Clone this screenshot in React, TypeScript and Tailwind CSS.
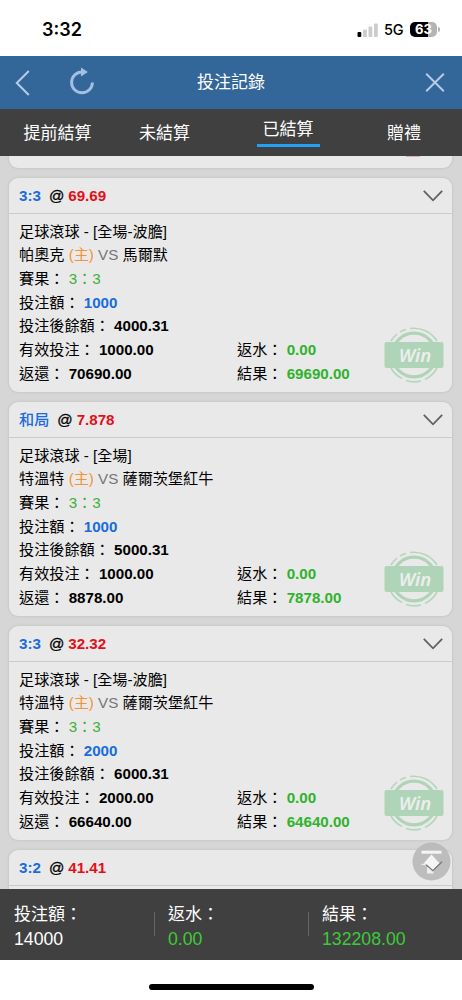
import type { ReactNode } from "react";

type Bet = {
  pick: string;
  odds: string;
  market: string;
  home: string;
  away: string;
  score: string;
  stake: string;
  balance: string;
  valid: string;
  payout: string;
  rebate: string;
  result: string;
};

const bets: Bet[] = [
  {
    pick: "3:3",
    odds: "69.69",
    market: "足球滾球 - [全場-波膽]",
    home: "帕奧克",
    away: "馬爾默",
    score: "3：3",
    stake: "1000",
    balance: "4000.31",
    valid: "1000.00",
    payout: "70690.00",
    rebate: "0.00",
    result: "69690.00",
  },
  {
    pick: "和局",
    odds: "7.878",
    market: "足球滾球 - [全場]",
    home: "特溫特",
    away: "薩爾茨堡紅牛",
    score: "3：3",
    stake: "1000",
    balance: "5000.31",
    valid: "1000.00",
    payout: "8878.00",
    rebate: "0.00",
    result: "7878.00",
  },
  {
    pick: "3:3",
    odds: "32.32",
    market: "足球滾球 - [全場-波膽]",
    home: "特溫特",
    away: "薩爾茨堡紅牛",
    score: "3：3",
    stake: "2000",
    balance: "6000.31",
    valid: "2000.00",
    payout: "66640.00",
    rebate: "0.00",
    result: "64640.00",
  },
];

function StatusBar() {
  return (
    <div className="flex h-14 shrink-0 items-center justify-between bg-white pt-[3px] pr-[22px] pl-[42px] font-['Inter','Liberation_Sans',sans-serif]">
      <span className="text-[18px] font-semibold">3:32</span>
      <div className="flex items-center">
        <svg width="21" height="14" viewBox="0 0 21 14" aria-hidden>
          <rect x="0.5" y="9" width="3.8" height="5" rx="1" fill="#000" />
          <rect x="6" y="6.5" width="3.8" height="7.5" rx="1" fill="#ccc" />
          <rect x="11.5" y="3.5" width="3.8" height="10.5" rx="1" fill="#ccc" />
          <rect x="17" y="0.5" width="3.8" height="13.5" rx="1" fill="#ccc" />
        </svg>
        <span className="ml-[6px] w-[20px] text-[14.5px] font-medium tracking-[-0.3px]">5G</span>
        <div className="ml-[6px] flex h-[15px] w-[27px] items-center justify-center rounded-[5px] bg-linear-to-r from-black from-65% to-[#b4b4b4] to-65% text-[13px] leading-none font-bold text-white">
          63
        </div>
        <span className="ml-px h-[5px] w-[2px] rounded-r-full bg-[#b4b4b4]" />
      </div>
    </div>
  );
}

function TitleBar() {
  return (
    <header className="flex h-[53px] shrink-0 items-center bg-[#336699] text-[17px] text-white">
      <div className="flex w-[148px] items-center pl-[14px]">
        <svg width="16" height="26" viewBox="0 0 16 26" fill="none" stroke="#b5cbed" strokeWidth="2" aria-hidden>
          <path d="M14.8 1 2.8 13l12 12" />
        </svg>
        <svg className="mb-[4px] ml-[39px]" width="26" height="28" viewBox="0 0 26 28" fill="none" aria-hidden>
          <path d="M23.4 15.4A10.4 10.4 0 1 1 13 5" stroke="#a3bfe5" strokeWidth="2.9" />
          <path d="M12 .5 18.9 5 12 9.5z" fill="#a3bfe5" />
        </svg>
      </div>
      <h1 className="flex-1 text-center">投注記錄</h1>
      <div className="flex w-[148px] justify-end pr-[17px]">
        <svg width="20" height="20" viewBox="0 0 20 20" stroke="#b9cae8" strokeWidth="2" aria-hidden>
          <path d="m1.2.7 17.6 17.6M18.8.7 1.2 18.3" />
        </svg>
      </div>
    </header>
  );
}

function Tabs() {
  return (
    <nav className="grid h-[47px] shrink-0 grid-cols-[115px_99px_148px_1fr] bg-[#404040] text-[17px] leading-[50px] text-white">
      <span className="text-center">提前結算</span>
      <span className="text-center">未結算</span>
      <span className="flex justify-center">
        <span className="mt-[1px] flex h-[37px] w-[63px] justify-center border-b-[3px] border-[#20a3f5] leading-[40px]">
          已結算
        </span>
      </span>
      <span className="pr-[16px] text-center">贈禮</span>
    </nav>
  );
}

function WinStamp() {
  return (
    <svg
      className="absolute right-[8.5px] bottom-[9px]"
      width="60"
      height="56"
      viewBox="0 0 60 56"
      fill="none"
      aria-hidden
    >
      <circle cx="30" cy="28" r="21.8" stroke="#afd4b8" strokeWidth="3.2" />
      <path d="M7 14a27 27 0 0 1 6-7M16 5a27 27 0 0 1 6-2.5M26 1.5a27 27 0 0 1 27 12.5" stroke="#b3d7bd" strokeWidth="1.6" />
      <path d="M7 41a27 27 0 0 0 11 10.5M22 53.5a27 27 0 0 0 15 .5M41 52.5a27 27 0 0 0 12-11.5" stroke="#b3d7bd" strokeWidth="1.6" />
      <rect x="0.5" y="15" width="59" height="26" rx="2" fill="#afd4b8" />
      <text
        x="31"
        y="34.5"
        textAnchor="middle"
        className="fill-[#ebefec] font-['Noto_Sans','Open_Sans',sans-serif] text-[18.5px] font-semibold italic"
      >
        Win
      </text>
    </svg>
  );
}

function CardHeader({ pick, odds, hideArrow }: { pick: string; odds: string; hideArrow?: boolean }) {
  return (
    <div className="flex h-9 items-center border-b border-[#cbcbcb] pt-px pr-[9px] pl-[10px] font-bold">
      <span className={pick.includes(":") ? "text-[#1a6be0]" : "font-medium text-[#1a6be0]"}>{pick}</span>
      <span className="ml-[8px] font-normal text-black [-webkit-text-stroke:0.3px_black]">@</span>
      <span className="ml-[4px] text-[#e2101a]">{odds}</span>
      {!hideArrow && (
        <svg className="mb-px ml-auto" width="20" height="12" viewBox="0 0 20 12" fill="none" stroke="#606060" strokeWidth="1.8" aria-hidden>
          <path d="m.8.8 9.2 9.5L19.2.8" />
        </svg>
      )}
    </div>
  );
}

function Field({ label, children }: { label: string; children: ReactNode }) {
  return (
    <p>
      {label}： <span className="font-bold">{children}</span>
    </p>
  );
}

function BetCard({ bet }: { bet: Bet }) {
  return (
    <section className="relative h-[214px] shrink-0 rounded-[9px] bg-[#e9e9e9] shadow-[0_0_3px_rgba(0,0,0,0.13)]">
      <CardHeader pick={bet.pick} odds={bet.odds} />
      <div className="px-[10px] pt-[5.5px] leading-[23.7px]">
        <p>{bet.market}</p>
        <p>
          {bet.home} <span className="text-[#f59335]">(主)</span>{" "}
          <span className="text-[#777]">VS</span> {bet.away}
        </p>
        <p>
          賽果： <span className="text-[#3eae3d]">{bet.score}</span>
        </p>
        <Field label="投注額">
          <span className="text-[#1a6be0]">{bet.stake}</span>
        </Field>
        <Field label="投注後餘額">{bet.balance}</Field>
        <div className="grid grid-cols-[218px_1fr]">
          <Field label="有效投注">{bet.valid}</Field>
          <Field label="返水">
            <span className="text-[#2fb32c]">{bet.rebate}</span>
          </Field>
          <Field label="返還">{bet.payout}</Field>
          <Field label="結果">
            <span className="text-[#2fb32c]">{bet.result}</span>
          </Field>
        </div>
      </div>
      <WinStamp />
    </section>
  );
}

function BackToTop() {
  return (
    <svg className="absolute right-[11px] bottom-[8px]" width="39" height="39" viewBox="0 0 39 39" aria-hidden>
      <circle cx="19.5" cy="19.5" r="19" fill="#b9b9b9" fillOpacity="0.93" />
      <rect x="9.5" y="8.7" width="20" height="3" fill="#f5f5f5" />
      <path d="M15 25h6.5v6.5H15z" fill="#eee" />
      <path d="M9.5 22.3h4M13 20.5v3" stroke="#eee" strokeWidth="1.2" />
      <path d="m19.5 12.5 8 8.7-6.7 7.5-8.6-8z" fill="#f5f5f5" />
      <path d="m14.2 22.7 6.6 6 9.2-9" fill="none" stroke="#777" strokeWidth="1.2" />
    </svg>
  );
}

function Total({ label, value, green }: { label: string; value: string; green?: boolean }) {
  return (
    <div>
      <p>{label}：</p>
      <p className={green ? "text-[17.7px] text-[#3dca3a]" : "text-[17.7px]"}>{value}</p>
    </div>
  );
}

function Summary() {
  return (
    <footer className="grid h-[71px] shrink-0 grid-cols-[140px_154px_1fr] bg-[#404040] pt-[13px] pl-[14px] text-[17px] leading-[25px] text-white">
      <Total label="投注額" value="14000" />
      <div className="flex items-start gap-[13px]">
        <span className="mt-[10px] h-6 w-px bg-[#666]" />
        <Total label="返水" value="0.00" green />
      </div>
      <div className="flex items-start gap-[13px]">
        <span className="mt-[10px] h-6 w-px bg-[#666]" />
        <Total label="結果" value="132208.00" green />
      </div>
    </footer>
  );
}

export default function App() {
  return (
    <div
      lang="zh-Hant"
      className="flex h-[1000px] w-[462px] flex-col overflow-hidden bg-white font-['Liberation_Sans','Noto_Sans_CJK_TC',sans-serif] text-[15.15px] text-black"
    >
      <StatusBar />
      <TitleBar />
      <Tabs />
      <main className="relative flex min-h-0 flex-1 flex-col gap-[10px] overflow-hidden bg-[#d6d6d6] pr-[10px] pl-[9px]">
        {/* Tail of the card scrolled under the tabs */}
        <div className="flex h-[12px] shrink-0 justify-end rounded-b-[9px] bg-[#e9e9e9] pr-[32px] shadow-[0_0_3px_rgba(0,0,0,0.13)]">
          <span className="h-px w-[14px] bg-[#dfb0b4]" />
        </div>
        {bets.map((bet) => (
          <BetCard key={bet.result} bet={bet} />
        ))}
        <section className="shrink-0 rounded-t-[9px] bg-[#e9e9e9] shadow-[0_0_3px_rgba(0,0,0,0.13)]">
          <CardHeader pick="3:2" odds="41.41" hideArrow />
          <div className="h-4" />
        </section>
        <BackToTop />
      </main>
      <Summary />
      <div className="flex h-[40px] shrink-0 justify-center bg-white pt-[24px]">
        <span className="h-[6px] w-[165px] rounded-full bg-black" />
      </div>
    </div>
  );
}
